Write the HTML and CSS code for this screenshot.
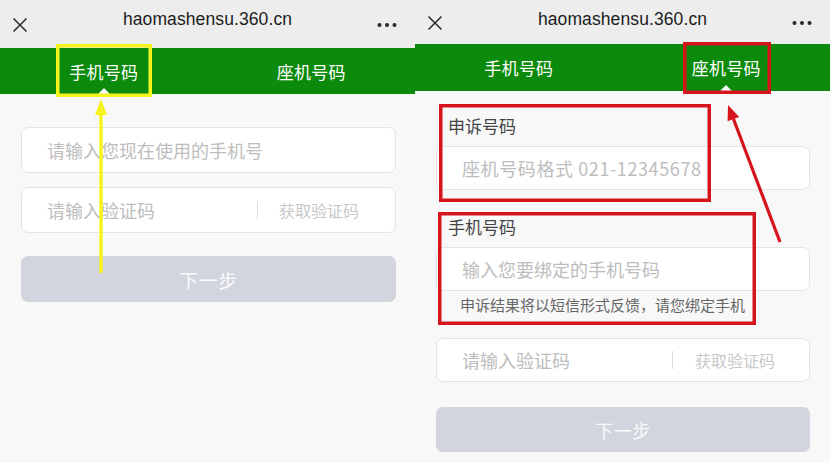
FILE: index.html
```html
<!DOCTYPE html>
<html lang="zh-CN">
<head>
<meta charset="utf-8">
<title>号码申诉</title>
<link rel="stylesheet" href="styles.css">
</head>
<body>
<div class="screens">

  <!-- Mobile number tab -->
  <section class="screen screen-a">
    <header class="topbar">
      <span class="icon-close">
        <svg width="16" height="16" viewBox="0 0 16 16"><path d="M1.5 1.5 L14.5 14.5 M14.5 1.5 L1.5 14.5" stroke="#2a2a2a" stroke-width="1.5" fill="none"/></svg>
      </span>
      <span class="site">haomashensu.360.cn</span>
      <span class="icon-more">
        <svg width="20" height="6" viewBox="0 0 20 6"><circle cx="2.5" cy="3" r="2" fill="#2a2a2a"/><circle cx="10" cy="3" r="2" fill="#2a2a2a"/><circle cx="17.5" cy="3" r="2" fill="#2a2a2a"/></svg>
      </span>
    </header>
    <nav class="tabs">
      <span class="tab active">手机号码</span>
      <span class="tab">座机号码</span>
    </nav>
    <form class="form">
      <label class="field">
        <input type="text" placeholder="请输入您现在使用的手机号">
      </label>
      <label class="field field-code">
        <input type="text" placeholder="请输入验证码">
        <span class="divider"></span>
        <span class="sms">获取验证码</span>
      </label>
      <button type="button" class="next">下一步</button>
    </form>
    <svg class="marks" width="415" height="463" viewBox="0 0 415 463">
      <rect x="57.75" y="45.75" width="92.5" height="49.5" fill="none" stroke="#f4f41c" stroke-width="3.5"/>
      <line x1="101" y1="273" x2="101" y2="112" stroke="#f4f41c" stroke-width="3.5"/>
      <polygon points="101,99 95,115 107,115" fill="#f4f41c"/>
    </svg>
  </section>

  <!-- Landline tab -->
  <section class="screen screen-b">
    <header class="topbar">
      <span class="icon-close">
        <svg width="16" height="16" viewBox="0 0 16 16"><path d="M1.5 1.5 L14.5 14.5 M14.5 1.5 L1.5 14.5" stroke="#2a2a2a" stroke-width="1.5" fill="none"/></svg>
      </span>
      <span class="site">haomashensu.360.cn</span>
      <span class="icon-more">
        <svg width="20" height="6" viewBox="0 0 20 6"><circle cx="2.5" cy="3" r="2" fill="#2a2a2a"/><circle cx="10" cy="3" r="2" fill="#2a2a2a"/><circle cx="17.5" cy="3" r="2" fill="#2a2a2a"/></svg>
      </span>
    </header>
    <nav class="tabs">
      <span class="tab">手机号码</span>
      <span class="tab active">座机号码</span>
    </nav>
    <form class="form">
      <div class="label">申诉号码</div>
      <label class="field">
        <input type="text" class="wide" placeholder="座机号码格式 021-12345678">
      </label>
      <div class="label label-second">手机号码</div>
      <label class="field">
        <input type="text" placeholder="输入您要绑定的手机号码">
      </label>
      <p class="hint">申诉结果将以短信形式反馈，请您绑定手机</p>
      <label class="field field-code">
        <input type="text" placeholder="请输入验证码">
        <span class="divider"></span>
        <span class="sms">获取验证码</span>
      </label>
      <button type="button" class="next">下一步</button>
    </form>
    <svg class="marks" width="415" height="463" viewBox="0 0 415 463">
      <g fill="none" stroke="#d5141c" stroke-width="3.5">
        <rect x="269.75" y="43.75" width="84.5" height="48.5"/>
        <rect x="25.75" y="105.75" width="268.5" height="94.5"/>
        <rect x="24.75" y="213.75" width="314.5" height="109.5"/>
      </g>
      <line x1="365" y1="242" x2="318.5" y2="119" stroke="#d5141c" stroke-width="3.2"/>
      <polygon points="313,105 324.2,116.9 312.6,121.3" fill="#d5141c"/>
    </svg>
  </section>

</div>
</body>
</html>
```

FILE: styles.css
```css
* {
  box-sizing: border-box;
}

html,
body {
  margin: 0;
  padding: 0;
  background: #ffffff;
}

body {
  width: 830px;
  height: 463px;
  overflow: hidden;
  font-family: "Liberation Sans", "Noto Sans CJK SC", sans-serif;
}

.screens {
  display: flex;
  width: 830px;
  height: 463px;
}

.screen {
  position: relative;
  width: 415px;
  height: 463px;
  flex: none;
  background: #f8f8f8;
  overflow: hidden;
}

/* ---- browser top bar ---- */
.topbar {
  display: grid;
  grid-template-columns: 60px 1fr 60px;
  align-items: start;
  height: 48px;
  background: #ededed;
}

.screen-b .topbar {
  height: 44px;
}

.site {
  text-align: center;
  font-size: 17.5px;
  line-height: 20px;
  padding-top: 9px;
  color: #1c1c1c;
  letter-spacing: 0.1px;
}

.icon-close {
  display: flex;
  padding-left: 12px;
  margin-top: 17px;
}

.screen-b .icon-close {
  margin-top: 15px;
}

.icon-more {
  display: flex;
  justify-content: flex-end;
  padding-right: 18px;
  margin-top: 22px;
}

.screen-b .icon-more {
  margin-top: 20px;
}

/* ---- green tab strip ---- */
.tabs {
  display: flex;
  height: 46px;
  background: #0b8a0b;
}

.screen-b .tabs {
  height: 47px;
}

.tab {
  position: relative;
  flex: 1;
  display: flex;
  align-items: center;
  justify-content: center;
  font-family: "Noto Sans CJK SC", sans-serif;
  font-size: 17px;
  color: #ffffff;
  letter-spacing: 0.3px;
}

.tab.active::after {
  content: "";
  position: absolute;
  left: 50%;
  bottom: 0;
  margin-left: -6px;
  border-left: 6px solid transparent;
  border-right: 6px solid transparent;
  border-bottom: 6px solid #f8f8f8;
}

/* ---- form ---- */
.form {
  display: flex;
  flex-direction: column;
  margin: 0;
  padding: 33px 19px 0 21px;
  font-family: "Noto Sans CJK SC", sans-serif;
}

.screen-b .form {
  padding: 23px 20px 0 21px;
}

.field {
  display: flex;
  align-items: center;
  height: 46px;
  padding-left: 25px;
  background: #ffffff;
  border: 1px solid #e4e4e4;
  border-radius: 7px;
}

.screen-b .field {
  height: 44px;
  margin-top: 8px;
}

.field + .field {
  margin-top: 14px;
}

.field input {
  flex: 1;
  min-width: 0;
  border: 0;
  outline: 0;
  padding: 0;
  background: transparent;
  font-family: "Noto Sans CJK SC", sans-serif;
  font-size: 18px;
  color: #333;
}

.screen-b .field input.wide {
  letter-spacing: 0.6px;
}

.field input::placeholder {
  color: #bdbdbd;
}

.field-code {
  padding-right: 36px;
}

.screen-b .field-code {
  padding-right: 34px;
  margin-top: 23px;
}

.divider {
  width: 1px;
  height: 18px;
  background: #dcdcdc;
  margin-right: 21px;
}

.screen-b .divider {
  margin-right: 22px;
}

.sms {
  font-size: 16px;
  line-height: 20px;
  color: #c8c8c8;
}

.next {
  height: 46px;
  margin-top: 23px;
  padding: 0;
  border: 0;
  border-radius: 7px;
  background: #d2d5dd;
  font-family: "Noto Sans CJK SC", sans-serif;
  font-size: 19px;
  color: rgba(255, 255, 255, 0.92);
  letter-spacing: 0.5px;
}

.screen-b .next {
  height: 45px;
  margin-top: 25px;
  font-size: 18px;
}

.label {
  padding-left: 12px;
  font-size: 17px;
  line-height: 24px;
  color: #444;
}

.label-second {
  margin-top: 25px;
}

.hint {
  margin: 4px 0 0;
  padding-left: 24px;
  font-size: 15px;
  line-height: 20px;
  color: #666;
}

/* ---- annotation layer ---- */
.marks {
  position: absolute;
  left: 0;
  top: 0;
  pointer-events: none;
}
```
